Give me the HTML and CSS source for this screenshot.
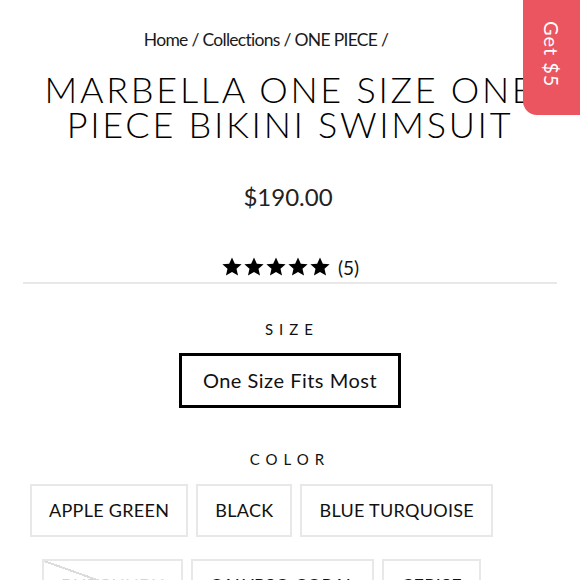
FILE: index.html
```html
<!DOCTYPE html>
<html>
<head>
<meta charset="utf-8">
<link rel="stylesheet" href="styles.css">
</head>
<body>
<div class="badge"><span class="badge-text">Get $5</span></div>
<main class="product">
  <nav class="crumbs">Home / Collections / ONE PIECE /</nav>
  <h1 class="title">MARBELLA ONE SIZE ONE PIECE BIKINI SWIMSUIT</h1>
  <div class="price">$190.00</div>
  <div class="rating">
    <span class="stars">
      <svg viewBox="0 0 24 24"><path d="M12 1.5l3.1 7 7.4.6-5.6 4.9 1.7 7.4L12 17.5l-6.6 3.9 1.7-7.4L1.5 9.1l7.4-.6z"/></svg>
      <svg viewBox="0 0 24 24"><path d="M12 1.5l3.1 7 7.4.6-5.6 4.9 1.7 7.4L12 17.5l-6.6 3.9 1.7-7.4L1.5 9.1l7.4-.6z"/></svg>
      <svg viewBox="0 0 24 24"><path d="M12 1.5l3.1 7 7.4.6-5.6 4.9 1.7 7.4L12 17.5l-6.6 3.9 1.7-7.4L1.5 9.1l7.4-.6z"/></svg>
      <svg viewBox="0 0 24 24"><path d="M12 1.5l3.1 7 7.4.6-5.6 4.9 1.7 7.4L12 17.5l-6.6 3.9 1.7-7.4L1.5 9.1l7.4-.6z"/></svg>
      <svg viewBox="0 0 24 24"><path d="M12 1.5l3.1 7 7.4.6-5.6 4.9 1.7 7.4L12 17.5l-6.6 3.9 1.7-7.4L1.5 9.1l7.4-.6z"/></svg>
    </span>
    <span class="count">(5)</span>
  </div>
  <hr class="rule">
  <div class="label">SIZE</div>
  <div class="options">
    <span class="opt opt-selected">One Size Fits Most</span>
  </div>
  <div class="label label-color">COLOR</div>
  <div class="options colors">
    <span class="opt">APPLE GREEN</span>
    <span class="opt">BLACK</span>
    <span class="opt">BLUE TURQUOISE</span>
    <span class="opt opt-disabled">BURGUNDY</span>
    <span class="opt">CALYPSO CORAL</span>
    <span class="opt">CERISE</span>
  </div>
</main>
</body>
</html>
```
FILE: styles.css
```css
html, body {
  margin: 0;
  padding: 0;
  background: #fff;
}
body {
  font-family: "Lato", "DejaVu Sans", sans-serif;
  color: #111;
  overflow: hidden;
  height: 580px;
}
.product {
  padding: 28px 23px 0;
  text-align: center;
}
.crumbs {
  font-size: 17.5px;
  line-height: 24px;
  letter-spacing: -0.7px;
  color: #1a1a1a;
  padding-right: 48px;
}
.title {
  margin: 20px 0 0;
  font-weight: 300;
  font-size: 36px;
  line-height: 35px;
  letter-spacing: 2.7px;
  color: #000;
}
.price {
  margin-top: 40px;
  font-size: 24px;
  line-height: 30px;
  color: #222;
  padding-right: 4px;
}
.rating {
  margin-top: 42px;
  display: flex;
  justify-content: center;
  align-items: center;
  gap: 7px;
  height: 26px;
}
.stars {
  display: flex;
}
.stars svg {
  width: 22px;
  height: 22px;
  fill: #000;
}
.count {
  font-size: 19px;
}
.rule {
  margin: 2px 0 0;
  border: 0;
  height: 2px;
  background: #e8e8e8;
}
.label {
  margin-top: 35px;
  font-size: 15px;
  letter-spacing: 6px;
  line-height: 20px;
  padding-left: 4px;
}
.label-color {
  margin-top: 41px;
  padding-left: 0;
}
.options {
  margin-top: 14px;
  display: flex;
  flex-wrap: wrap;
  justify-content: center;
  gap: 22px 8px;
}
.colors {
  margin-top: 15px;
  padding-right: 57px;
}
.opt {
  display: inline-block;
  box-sizing: border-box;
  height: 53px;
  line-height: 49px;
  padding: 0 17px;
  border: 2px solid #e8e8e8;
  font-size: 18px;
  letter-spacing: 0.3px;
  color: #111;
  position: relative;
}
.opt-selected {
  height: 55px;
  line-height: 49px;
  border: 3px solid #000;
  padding: 0 21px;
  font-size: 20px;
  letter-spacing: 0.5px;
}
.opt-disabled {
  color: #d4d4d4;
}
.opt-disabled::after {
  content: "";
  position: absolute;
  inset: 0;
  background: linear-gradient(to top right, transparent calc(50% - 1px), #dcdcdc calc(50% - 1px), #dcdcdc calc(50% + 1px), transparent calc(50% + 1px));
}
.badge {
  position: absolute;
  top: 0;
  right: 0;
  width: 57px;
  height: 115px;
  background: #eb5560;
  border-bottom-left-radius: 14px;
  display: flex;
  align-items: center;
  justify-content: center;
}
.badge-text {
  writing-mode: vertical-rl;
  color: #fff;
  font-size: 20px;
  letter-spacing: 1px;
  margin-top: -6px;
}
```
